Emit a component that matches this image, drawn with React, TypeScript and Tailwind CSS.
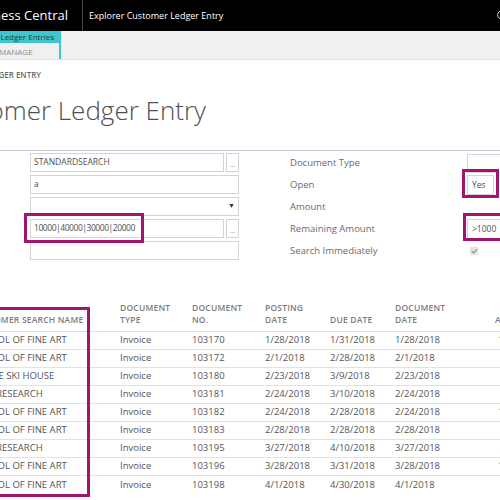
import React from 'react';
import { Search, Check } from 'lucide-react';

type Row = {
  name: string;
  no: string;
  posting: string;
  due: string;
  docDate: string;
  amount: string;
};

const rows: Row[] = [
  { name: 'SCHOOL OF FINE ART', no: '103170', posting: '1/28/2018', due: '1/31/2018', docDate: '1/28/2018', amount: '12,487.50' },
  { name: 'SCHOOL OF FINE ART', no: '103172', posting: '2/1/2018', due: '2/28/2018', docDate: '2/1/2018', amount: '1,208.40' },
  { name: 'ALPINE SKI HOUSE', no: '103180', posting: '2/23/2018', due: '3/9/2018', docDate: '2/23/2018', amount: '8,540.20' },
  { name: 'TREY RESEARCH', no: '103181', posting: '2/24/2018', due: '3/10/2018', docDate: '2/24/2018', amount: '2,316.90' },
  { name: 'SCHOOL OF FINE ART', no: '103182', posting: '2/24/2018', due: '2/28/2018', docDate: '2/24/2018', amount: '15,902.10' },
  { name: 'SCHOOL OF FINE ART', no: '103183', posting: '2/28/2018', due: '2/28/2018', docDate: '2/28/2018', amount: '9,714.80' },
  { name: 'TREY RESEARCH', no: '103195', posting: '3/27/2018', due: '4/10/2018', docDate: '3/27/2018', amount: '3,402.60' },
  { name: 'SCHOOL OF FINE ART', no: '103196', posting: '3/28/2018', due: '3/31/2018', docDate: '3/28/2018', amount: '11,058.00' },
  { name: 'SCHOOL OF FINE ART', no: '103198', posting: '4/1/2018', due: '4/30/2018', docDate: '4/1/2018', amount: '4,120.30' },
];

const cols = 'grid grid-cols-[148px_72px_73px_65px_65px_100px_46px]';

const Input: React.FC<{ value?: string; button?: boolean; select?: boolean; tight?: boolean }> = ({ value, button, select, tight }) => (
  <div className="flex h-[19px] gap-[2px]">
    <div className="flex-1 flex items-center border border-[#d4d4d4] pl-[3px] pr-[3px] text-[8.5px] text-[#505050]">
      <span className={`flex-1 whitespace-nowrap ${tight ? 'tracking-[-0.45px]' : ''}`}>{value}</span>
      {select && <span className="text-[7px] text-[#333]">▼</span>}
    </div>
    {button && (
      <div className="w-[13px] border border-[#d4d4d4] flex items-end justify-center pb-[3px] text-[7px] leading-none text-[#888]">
        ...
      </div>
    )}
  </div>
);

const App: React.FC = () => {
  return (
    <div className="relative w-[500px] h-[500px] overflow-hidden bg-white font-['Open_Sans',sans-serif]">
      {/* Top bar */}
      <div className="flex h-[31px] bg-black items-stretch">
        <div className="w-[83px] shrink-0 flex justify-end items-center pr-[14px] border-r border-[#4a4a4a] overflow-hidden">
          <span className="text-white text-[13px] whitespace-nowrap">Dynamics 365 Business Central</span>
        </div>
        <div className="pl-[6px] flex items-center text-white text-[9px] font-medium whitespace-nowrap">
          Explorer Customer Ledger Entry
        </div>
        <div className="ml-auto mr-[-9px] flex items-center">
          <Search size={13} color="#ffffff" strokeWidth={1.5} />
        </div>
      </div>

      {/* Tab band */}
      <div className="flex h-[29px] bg-[#f0f0f0] border-b border-[#e2e2e2]">
        <div className="w-[61px] border-r-2 border-[#3ec6cc] flex flex-col">
          <div className="h-[12px] bg-[#3ec6cc] flex justify-end items-center overflow-hidden pr-[5px]">
            <span className="text-[8px] text-[#2a3a3c] whitespace-nowrap">Explorer Customer Ledger Entries</span>
          </div>
          <div className="pt-[3px] -ml-[1px] text-[8px] text-[#8a8a8a] leading-[12px]">MANAGE</div>
        </div>
      </div>

      {/* Breadcrumb + title */}
      <div className="mt-[10px] w-[41px] flex justify-end overflow-hidden">
        <span className="text-[8px] font-semibold text-[#6a6a6a] whitespace-nowrap leading-[10px]">CUSTOMER LEDGER ENTRY</span>
      </div>
      <div className="mt-[13px] w-[206px] flex justify-end overflow-hidden">
        <span className="text-[26px] font-light text-[#505050] whitespace-nowrap leading-[34px]">Customer Ledger Entry</span>
      </div>

      {/* Filter form */}
      <div className="mt-[23px] border-t border-[#c8cbdc] flex h-[112px]">
        <div className="ml-[30px] w-[209px] shrink-0 flex flex-col gap-[3px] pt-[2px]">
          <Input value="STANDARDSEARCH" button />
          <Input value="a" />
          <Input select />
          <Input value="10000|40000|30000|20000" button tight />
          <Input />
        </div>
        <div className="ml-[51px] flex-1 min-w-0 flex flex-col pt-[1px] text-[9.5px] text-[#6b6b6b]">
          <div className="h-[22px] flex items-center">
            <span className="w-[177px] shrink-0">Document Type</span>
            <div className="h-[19px] w-[40px] shrink-0 border border-[#d4d4d4]" />
          </div>
          <div className="h-[22px] flex items-center">
            <span className="w-[177px] shrink-0">Open</span>
            <div className="h-[20px] w-[27px] shrink-0 border border-[#d4d4d4] flex items-center pl-[4px] text-[8.5px] text-[#505050]">Yes</div>
          </div>
          <div className="h-[22px] flex items-center">
            <span className="w-[177px] shrink-0">Amount</span>
          </div>
          <div className="h-[22px] flex items-center">
            <span className="w-[177px] shrink-0">Remaining Amount</span>
            <div className="h-[21px] w-[40px] shrink-0 border border-[#d4d4d4] flex items-center pl-[4px] text-[8.5px] text-[#505050]">&gt;1000</div>
          </div>
          <div className="h-[22px] flex items-center">
            <span className="w-[180px] shrink-0">Search Immediately</span>
            <div className="w-[8px] h-[8px] bg-[#e2e2e2] flex items-center justify-center">
              <Check size={7} color="#444" strokeWidth={3} />
            </div>
          </div>
        </div>
      </div>

      {/* Table */}
      <div className="mt-[40px] -ml-[28px] w-[580px] text-[9.5px] text-[#555]">
        <div className={`${cols} h-[30px] items-end pb-[5px] border-b border-[#dedede] text-[8.5px] font-semibold text-[#7b7b7b] leading-[12px] tracking-[0.2px]`}>
          <div>CUSTOMER SEARCH NAME</div>
          <div>DOCUMENT<br />TYPE</div>
          <div>DOCUMENT<br />NO.</div>
          <div>POSTING<br />DATE</div>
          <div>DUE DATE</div>
          <div>DOCUMENT<br />DATE</div>
          <div>AMOUNT</div>
        </div>
        {rows.map((r, i) => (
          <div
            key={i}
            className={`${cols} h-[18px] items-center ${i < rows.length - 1 ? 'border-b border-[#e2e2e2]' : ''}`}
          >
            <div className="whitespace-nowrap">{r.name}</div>
            <div>Invoice</div>
            <div>{r.no}</div>
            <div>{r.posting}</div>
            <div>{r.due}</div>
            <div>{r.docDate}</div>
            <div className="text-right whitespace-nowrap text-[#2a9ea6]">{r.amount}</div>
          </div>
        ))}
      </div>

      {/* Highlight boxes */}
      <div className="absolute left-[24px] top-[213px] w-[120px] h-[30px] border-[3px] border-[#a2156f]" />
      <div className="absolute left-[462px] top-[169px] w-[37px] h-[29px] border-[3px] border-[#a2156f]" />
      <div className="absolute left-[463px] top-[213px] w-[45px] h-[28px] border-[3px] border-[#a2156f]" />
      <div className="absolute left-[-6px] top-[307px] w-[96px] h-[190px] border-[3px] border-[#a2156f]" />
    </div>
  );
};

export default App;
